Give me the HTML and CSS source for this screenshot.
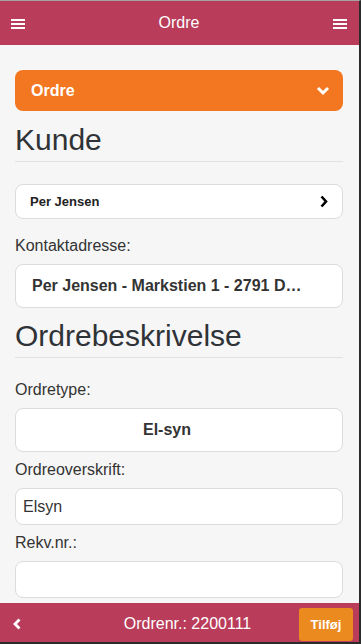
FILE: index.html
```html
<!DOCTYPE html>
<html lang="da">
<head>
    <meta charset="UTF-8">
    <meta name="viewport" content="width=device-width, initial-scale=1.0">
    <title>Ordre</title>
    <link rel="stylesheet" href="styles.css">
</head>
<body>
    <div class="app">
        <div class="header">
            <span class="burger"><i></i><i></i><i></i></span>
            <h1>Ordre</h1>
            <span class="burger"><i></i><i></i><i></i></span>
        </div>
        <div class="content">
            <div class="collapsible">
                <span>Ordre</span>
                <svg width="14" height="10" viewBox="0 0 14 10"><path d="M2 2 L7 7 L12 2" fill="none" stroke="#fff" stroke-width="3"/></svg>
            </div>
            <h2>Kunde</h2>
            <div class="btn btn-customer">
                <span>Per Jensen</span>
                <svg width="8" height="13" viewBox="0 0 8 13"><path d="M1.5 1.5 L6 6.5 L1.5 11.5" fill="none" stroke="#000" stroke-width="2.6"/></svg>
            </div>
            <label>Kontaktadresse:</label>
            <div class="btn btn-select">Per Jensen - Markstien 1 - 2791 Dragør</div>
            <h2>Ordrebeskrivelse</h2>
            <label>Ordretype:</label>
            <div class="btn btn-select">El-syn</div>
            <label>Ordreoverskrift:</label>
            <input class="text-input" type="text" value="Elsyn">
            <label>Rekv.nr.:</label>
            <input class="text-input" type="text" value="">
        </div>
        <div class="footer">
            <span class="back">
                <svg width="8" height="12" viewBox="0 0 8 12"><path d="M6.5 1.5 L2 6 L6.5 10.5" fill="none" stroke="#fff" stroke-width="2.8"/></svg>
            </span>
            <div class="footer-title">Ordrenr.: 2200111</div>
            <button class="add">Tilføj</button>
        </div>
    </div>
</body>
</html>
```

FILE: styles.css
```css
body {
    margin: 0;
    font-family: "Liberation Sans", Arial, sans-serif;
    background-color: #f6f6f6;
}
.app {
    height: 644px;
    display: flex;
    flex-direction: column;
    box-sizing: border-box;
    border-top: 1px solid #a4a4a4;
    border-right: 2px solid #2b2b2b;
    border-bottom: 2px solid #2b2b2b;
    overflow: hidden;
}
.header {
    height: 44px;
    flex: none;
    background-color: #b93d5a;
    display: flex;
    align-items: center;
    justify-content: space-between;
    padding: 0 12px 0 11px;
}
.header h1 {
    margin: 0;
    font-size: 16px;
    font-weight: normal;
    color: #fff;
}
.burger {
    width: 14px;
    display: flex;
    flex-direction: column;
    gap: 2px;
    margin-top: 1px;
}
.burger i {
    display: block;
    height: 2px;
    background: #fff;
}
.content {
    flex: 1;
    overflow: hidden;
    padding: 25px 16px 0 15px;
}
.collapsible {
    height: 41px;
    box-sizing: border-box;
    background-color: #f37721;
    border-radius: 8px;
    color: #fff;
    font-weight: bold;
    font-size: 16px;
    display: flex;
    align-items: center;
    justify-content: space-between;
    padding: 0 13px 0 16px;
}
.collapsible svg {
    margin-top: 1px;
}
h2 {
    margin: 10px 0 0;
    font-size: 30px;
    line-height: 36px;
    font-weight: normal;
    color: #2f3337;
    padding-bottom: 3px;
    border-bottom: 1px solid #e2e2e2;
}
.collapsible + h2 {
    margin-top: 11px;
}
.btn {
    background-color: #fff;
    border: 1px solid #dcdcdc;
    border-radius: 8px;
    box-sizing: border-box;
    color: #333;
    font-weight: bold;
}
.btn-customer {
    margin-top: 22px;
    margin-bottom: 17px;
    height: 35px;
    font-size: 13px;
    display: flex;
    align-items: center;
    justify-content: space-between;
    padding: 0 14px 0 14px;
    color: #222;
}
.btn-select {
    height: 44px;
    line-height: 42px;
    font-size: 16px;
    text-align: center;
    padding: 0 40px 0 16px;
    white-space: nowrap;
    overflow: hidden;
    text-overflow: ellipsis;
}
label {
    display: block;
    font-size: 16px;
    line-height: 20px;
    color: #333;
    margin: 8px 0 8px;
}
h2 + label {
    margin-top: 22px;
}
.text-input {
    display: block;
    width: 100%;
    height: 37px;
    box-sizing: border-box;
    border: 1px solid #dcdcdc;
    border-radius: 8px;
    background: #fff;
    font-family: "Liberation Sans", Arial, sans-serif;
    font-size: 16px;
    color: #333;
    padding: 0 7px;
    margin: 0;
    outline: none;
}
.footer {
    height: 39px;
    flex: none;
    background-color: #b93d5a;
    display: flex;
    align-items: center;
    padding-right: 6px;
}
.back {
    width: 40px;
    padding-left: 13px;
    box-sizing: border-box;
    display: flex;
    margin-top: 2px;
}
.footer-title {
    flex: 1;
    text-align: center;
    color: #fff;
    font-size: 16px;
    padding-left: 36px;
    margin-top: 3px;
}
.add {
    height: 33px;
    width: 54px;
    margin-top: 3px;
    background-color: #ea8a1f;
    border: none;
    border-radius: 3px;
    color: #fff;
    font-family: "Liberation Sans", Arial, sans-serif;
    font-weight: bold;
    font-size: 13px;
    padding: 0;
}
```
